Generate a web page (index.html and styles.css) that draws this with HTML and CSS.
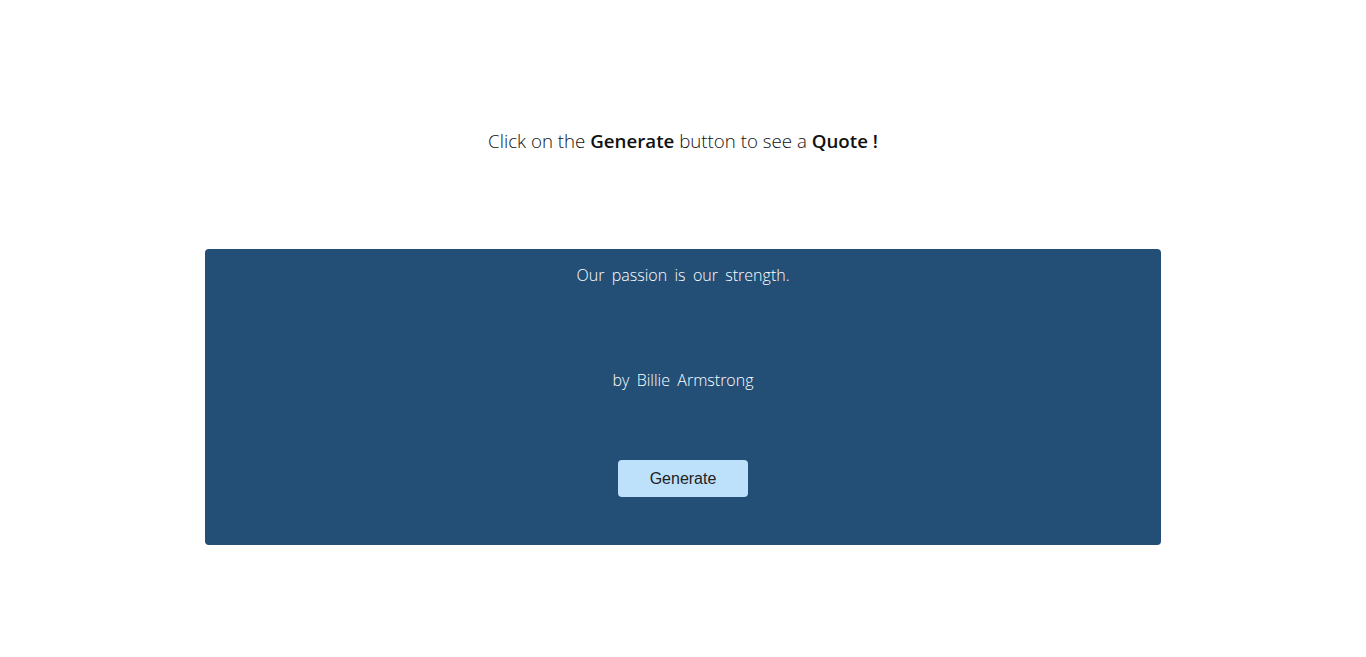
FILE: index.html
```html
<!DOCTYPE html>
<html>
<head>
<meta charset="utf-8">
<link rel="stylesheet" href="styles.css">
</head>
<body>
<main class="page">
  <h1 class="intro">Click on the <b>Generate</b> button to see a <b>Quote !</b></h1>
  <section class="card">
    <p class="quote">Our passion is our strength.</p>
    <p class="author">by Billie Armstrong</p>
    <button class="gen">Generate</button>
  </section>
</main>
</body>
</html>
```
FILE: styles.css
```css
html, body {
  margin: 0;
  padding: 0;
  background: #fff;
}
.page {
  display: flex;
  flex-direction: column;
  align-items: center;
  font-family: "Open Sans", sans-serif;
}
.intro {
  margin: 128px 0 0;
  font-size: 18.72px;
  line-height: 26px;
  font-weight: 300;
  color: #111;
}
.intro b {
  font-weight: 600;
}
.card {
  margin-top: 95px;
  width: 70%;
  height: 296px;
  box-sizing: border-box;
  background: #234e76;
  border-radius: 4px;
  display: flex;
  flex-direction: column;
  align-items: center;
  padding-top: 15px;
  color: #fff;
}
.quote, .author {
  margin: 0;
  font-size: 16px;
  line-height: 22px;
  font-weight: 300;
  word-spacing: 3.2px;
}
.author {
  margin-top: 83px;
}
.gen {
  margin-top: 69px;
  width: 130px;
  height: 37px;
  border: none;
  border-radius: 4px;
  background: #bde0fb;
  color: #222;
  font-family: "Liberation Sans", Arial, sans-serif;
  font-size: 16px;
  cursor: pointer;
}
```
